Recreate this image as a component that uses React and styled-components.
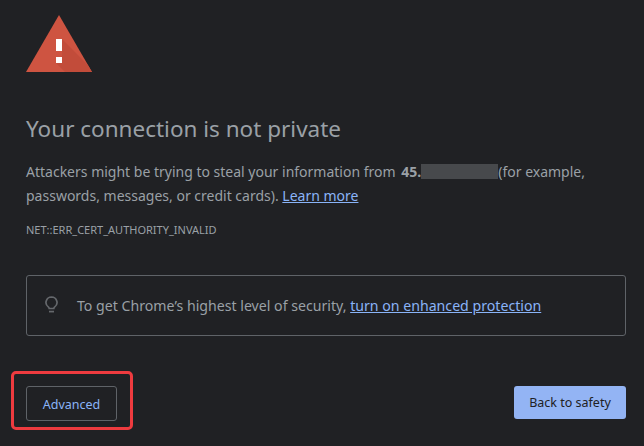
import React from 'react';
import styled, { createGlobalStyle } from 'styled-components';

const Global = createGlobalStyle`
    html, body {
        margin: 0;
        padding: 0;
        background: #202124;
    }
`

const Page = styled.div`
    width: 644px;
    height: 446px;
    box-sizing: border-box;
    padding: 15px 18px 0 26px;
    background: #202124;
    color: #9aa0a6;
    font-family: "Noto Sans", "Open Sans", sans-serif;
    overflow: hidden;
`

const WarningIcon = styled.svg`
    display: block;
    width: 66px;
    height: 57px;
`

const Heading = styled.h1`
    margin: 42px 0 0 0;
    font-size: 22.5px;
    line-height: 30px;
    font-weight: 400;
    color: #9aa0a6;
`

const Message = styled.p`
    margin: 16px 0 0 0;
    font-size: 14px;
    line-height: 24px;
`

const Host = styled.strong`
    font-weight: 700;
    margin-left: 2px;
`

const Redacted = styled.span`
    display: inline-block;
    width: 77px;
    height: 15px;
    vertical-align: -2px;
    background: #47494c;
`

const TextLink = styled.a`
    color: #8ab4f8;
    text-decoration: underline;
`

const ErrorCode = styled.div`
    margin-top: 14px;
    font-size: 11px;
    line-height: 16px;
`

const ProtectionBox = styled.div`
    display: flex;
    align-items: center;
    gap: 19px;
    box-sizing: border-box;
    height: 61px;
    margin-top: 37px;
    padding-left: 18px;
    border: 1px solid #5f6368;
    border-radius: 3px;
    font-size: 14.15px;
`

const Bulb = styled.svg`
    flex: none;
    width: 13px;
    height: 17px;
    margin-bottom: 2px;
`

const Actions = styled.div`
    display: flex;
    justify-content: space-between;
    align-items: flex-start;
    margin-top: 50px;
`

const Highlighted = styled.div`
    position: relative;
    &::after {
        content: "";
        position: absolute;
        top: -15px;
        left: -15px;
        right: -16px;
        bottom: -9px;
        border: 3.5px solid #ee3b3f;
        border-radius: 5px;
    }
`

const Button = styled.button`
    display: block;
    box-sizing: border-box;
    width: ${props => props.$primary ? '112px' : '91px'};
    height: ${props => props.$primary ? '33px' : '35px'};
    padding: ${props => props.$primary ? '0' : '2px 0 0 0'};
    border: ${props => props.$primary ? 'none' : '1px solid #5f6368'};
    border-radius: 3px;
    background: ${props => props.$primary ? '#93b4f4' : 'transparent'};
    color: ${props => props.$primary ? '#202124' : '#8ab4f8'};
    font-family: inherit;
    font-size: 12.5px;
`

const App = () => {
    return (
        <Page>
            <Global />
            <WarningIcon viewBox="0 0 66 57">
                <polygon points="33,0 66,57 0,57" fill="#ce5441" />
                <polygon points="36,24 61.9,49.9 66,57 39,57 30,48 36,41" fill="#c24c3a" />
                <rect x="30" y="24" width="6" height="12" fill="#fff" />
                <rect x="30" y="42" width="6" height="6" fill="#fff" />
            </WarningIcon>
            <Heading>Your connection is not private</Heading>
            <Message>
                Attackers might be trying to steal your information from <Host>45.</Host><Redacted />(for example, passwords, messages, or credit cards). <TextLink href="#">Learn more</TextLink>
            </Message>
            <ErrorCode>NET::ERR_CERT_AUTHORITY_INVALID</ErrorCode>
            <ProtectionBox>
                <Bulb viewBox="0 0 13 17" fill="none" stroke="#65686c" strokeWidth="1.7">
                    <path d="M6.5 1A5.5 5.5 0 0 0 3.5 11.1c.5.4.7.8.7 1.4h4.6c0-.6.2-1 .7-1.4A5.5 5.5 0 0 0 6.5 1z" />
                    <path d="M4 15.6h5" />
                </Bulb>
                <span>To get Chrome’s highest level of security, <TextLink href="#">turn on enhanced protection</TextLink></span>
            </ProtectionBox>
            <Actions>
                <Highlighted>
                    <Button>Advanced</Button>
                </Highlighted>
                <Button $primary>Back to safety</Button>
            </Actions>
        </Page>
    )
}

export default App;
